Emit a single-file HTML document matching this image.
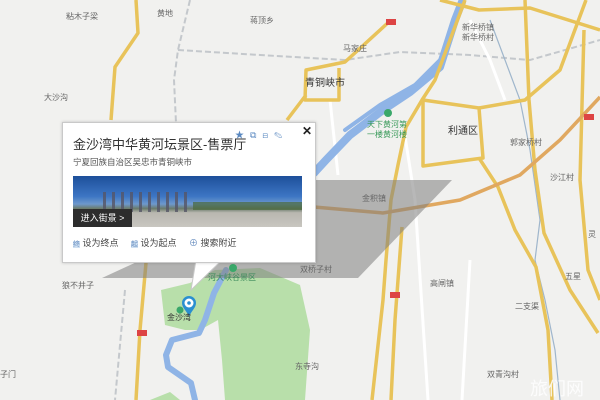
<!DOCTYPE html>
<html><head><meta charset="utf-8"><style>
html,body{margin:0;width:600px;height:400px;overflow:hidden;background:#f1f1ef;font-family:"Liberation Sans","Noto Sans CJK SC",sans-serif}
.map{position:absolute;left:0;top:0}
.lbl{position:absolute;font-size:8px;color:#666;white-space:nowrap;line-height:10px}
.pop{position:absolute;left:62px;top:122px;width:252px;height:139px;background:#fff;border:1px solid #c9c9c9;box-shadow:0 0 3px rgba(0,0,0,.2)}
</style></head><body>
<svg class="map" width="600" height="400" viewBox="0 0 600 400">
<path d="M161,290 L190,283 L215,270 L260,268 L300,285 L310,330 L305,400 L225,400 L222,360 L218,320 L200,330 L185,330 L165,325 Z" fill="#b8dfaa"/>
<path d="M150,400 L170,392 L180,400 Z" fill="#b8dfaa"/>
<g stroke="#c4c8cc" stroke-width="2" stroke-dasharray="6 3" fill="none">
<path d="M190,0 L178,50 L174,80 L176,123"/>
<path d="M178,50 L260,55 L345,60 L400,52 L470,55 L530,60 L600,40"/>
<path d="M125,290 L115,400"/>
</g>
<g stroke="#fff" stroke-width="3" fill="none">
<path d="M470,20 L490,60 L505,100 M330,100 L338,175 M404,130 L415,200 L428,400 M470,260 L462,400"/>
</g>
<g fill="none" stroke="#8fb4e6" stroke-linecap="round" stroke-linejoin="round">
<path d="M462,2 L455,20 L440,67 L410,92 L383,110 L350,135 L326,160 L314,173" stroke-width="8"/>
<path d="M440,60 L415,85 L380,105 L345,130" stroke-width="4"/>
<path d="M226,270 L214,293 L205,320 L199,333 L172,340 L166,355 L168,367 L191,383 L195,400" stroke-width="6"/>
</g>
<path d="M490,20 L505,60 L520,100 L530,150 L540,220 L535,260 L545,300 L555,350 L560,400" stroke="#9fb6cc" stroke-width="1.2" fill="none"/>
<g fill="none" stroke="#e8c35a" stroke-width="3.5" stroke-linejoin="round">
<path d="M136,0 L138,33 L115,67 L111,120"/>
<path d="M146,263 L140,330 L136,400"/>
<path d="M391,20 L345,62 L306,70 L305,100 L339,100 L339,68 M306,95 L287,120"/>
<path d="M465,0 L450,40 L435,80 L422,100 L406,127 L398,165 L391,200 L386,260 L383,300 L372,400"/>
<path d="M423,100 L479,108 L483,158 L423,166 Z"/>
<path d="M479,108 L525,100 L560,70 L586,0"/>
<path d="M525,0 L529,100 L535,170 L544,233 L570,290 L598,333"/>
<path d="M479,158 L498,187 L515,230 L536,267 L548,330 L552,400"/>
<path d="M440,0 L479,10 L530,8 L600,30"/>
<path d="M584,30 L580,180 L588,270 L600,300"/>
<path d="M402,227 L395,320 L391,400"/>
</g>
<path d="M314,207 L383,213 L460,200 L520,175 L560,140 L600,97" fill="none" stroke="#e0a860" stroke-width="3.5"/>
<polygon points="314,180 452,180 358,278 102,278" fill="#7d7d7d" opacity=".55"/>
<polygon points="196,260 222,260 191,290" fill="#fff" stroke="#c9c9c9" stroke-width="1"/>
<path d="M182,303 a7,7 0 1,1 14,0 c0,5 -5,8 -7,14 c-2,-6 -7,-9 -7,-14z" fill="#2a8fd0"/>
<circle cx="189" cy="303" r="4.5" fill="#fff"/>
<circle cx="189" cy="303" r="1.8" fill="#2a8fd0"/>
<circle cx="180" cy="310" r="3.5" fill="#3aa86a"/>
<circle cx="233" cy="268" r="4" fill="#3aa86a"/>
<circle cx="388" cy="113" r="4" fill="#3aa86a"/>
<rect x="584" y="114" width="10" height="6" fill="#d44"/>
<rect x="386" y="19" width="10" height="6" fill="#d44"/>
<rect x="137" y="330" width="10" height="6" fill="#d44"/>
<rect x="390" y="292" width="10" height="6" fill="#d44"/>
<text x="530" y="395" font-size="18" fill="#fff" opacity=".85" font-family="Noto Sans CJK SC">旅们网</text>
</svg>
<div class="lbl" style="left:66px;top:12px">粘木子梁</div>
<div class="lbl" style="left:157px;top:9px">黄地</div>
<div class="lbl" style="left:250px;top:16px">蒋顶乡</div>
<div class="lbl" style="left:343px;top:44px">马家庄</div>
<div class="lbl" style="left:44px;top:93px">大沙沟</div>
<div class="lbl" style="left:305px;top:78px;font-size:10px;color:#333;line-height:12px">青铜峡市</div>
<div class="lbl" style="left:448px;top:126px;font-size:10px;color:#333;line-height:12px">利通区</div>
<div class="lbl" style="left:367px;top:120px;color:#3a9a5a">天下黄河第<br>一楼黄河楼</div>
<div class="lbl" style="left:462px;top:23px">新华桥镇<br>新华桥村</div>
<div class="lbl" style="left:510px;top:138px">郭家桥村</div>
<div class="lbl" style="left:550px;top:173px">沙江村</div>
<div class="lbl" style="left:362px;top:194px">金积镇</div>
<div class="lbl" style="left:300px;top:265px">双桥子村</div>
<div class="lbl" style="left:62px;top:281px">狼不井子</div>
<div class="lbl" style="left:208px;top:273px;color:#3a8a5a">河大峡谷景区</div>
<div class="lbl" style="left:167px;top:313px;color:#333">金沙湾</div>
<div class="lbl" style="left:430px;top:279px">高闸镇</div>
<div class="lbl" style="left:515px;top:302px">二支渠</div>
<div class="lbl" style="left:565px;top:272px">五星</div>
<div class="lbl" style="left:295px;top:362px">东寺沟</div>
<div class="lbl" style="left:487px;top:370px">双青沟村</div>
<div class="lbl" style="left:0px;top:370px">子门</div>
<div class="lbl" style="left:588px;top:230px">灵</div>
<div class="pop">
 <div style="position:absolute;left:10px;top:11px;font-size:13px;color:#333">金沙湾中华黄河坛景区-售票厅</div>
 <div style="position:absolute;left:172px;top:5px;font-size:9px;color:#5a88c0;letter-spacing:6px">★⧉⊟✎</div>
 <div style="position:absolute;left:239px;top:1px;font-size:12px;font-weight:bold;color:#222">✕</div>
 <div style="position:absolute;left:10px;top:33px;font-size:8.5px;color:#555">宁夏回族自治区吴忠市青铜峡市</div>
 <div style="position:absolute;left:10px;top:53px;width:229px;height:51px;overflow:hidden;background:linear-gradient(#1d4f9a 0%,#3d76c4 40%,#6e98cc 55%,#6a7a6a 64%,#b9b7b0 72%,#c8c6c0 100%)">
  <div style="position:absolute;left:30px;top:16px;width:85px;height:20px;background:repeating-linear-gradient(90deg,#556 0 3px,transparent 3px 9px);opacity:.8"></div>
  <div style="position:absolute;left:120px;top:26px;width:109px;height:8px;background:#4a6a3a;opacity:.7"></div>
  <div style="position:absolute;left:0;top:33px;width:59px;height:18px;background:#2d2d2d;color:#fff;font-size:9px;line-height:18px;text-align:center">进入街景 &gt;</div>
 </div>
 <div style="position:absolute;left:10px;top:113px;font-size:9px;color:#444">
  <span style="background:#cfe0f2;color:#6a8fc0;font-size:7px">终</span> 设为终点 &nbsp;&nbsp;&nbsp;&nbsp;<span style="background:#cfe0f2;color:#6a8fc0;font-size:7px">起</span> 设为起点 &nbsp;&nbsp;&nbsp;&nbsp;<span style="color:#6a8fc0">⊕</span> 搜索附近</div>
</div>
</body></html>
